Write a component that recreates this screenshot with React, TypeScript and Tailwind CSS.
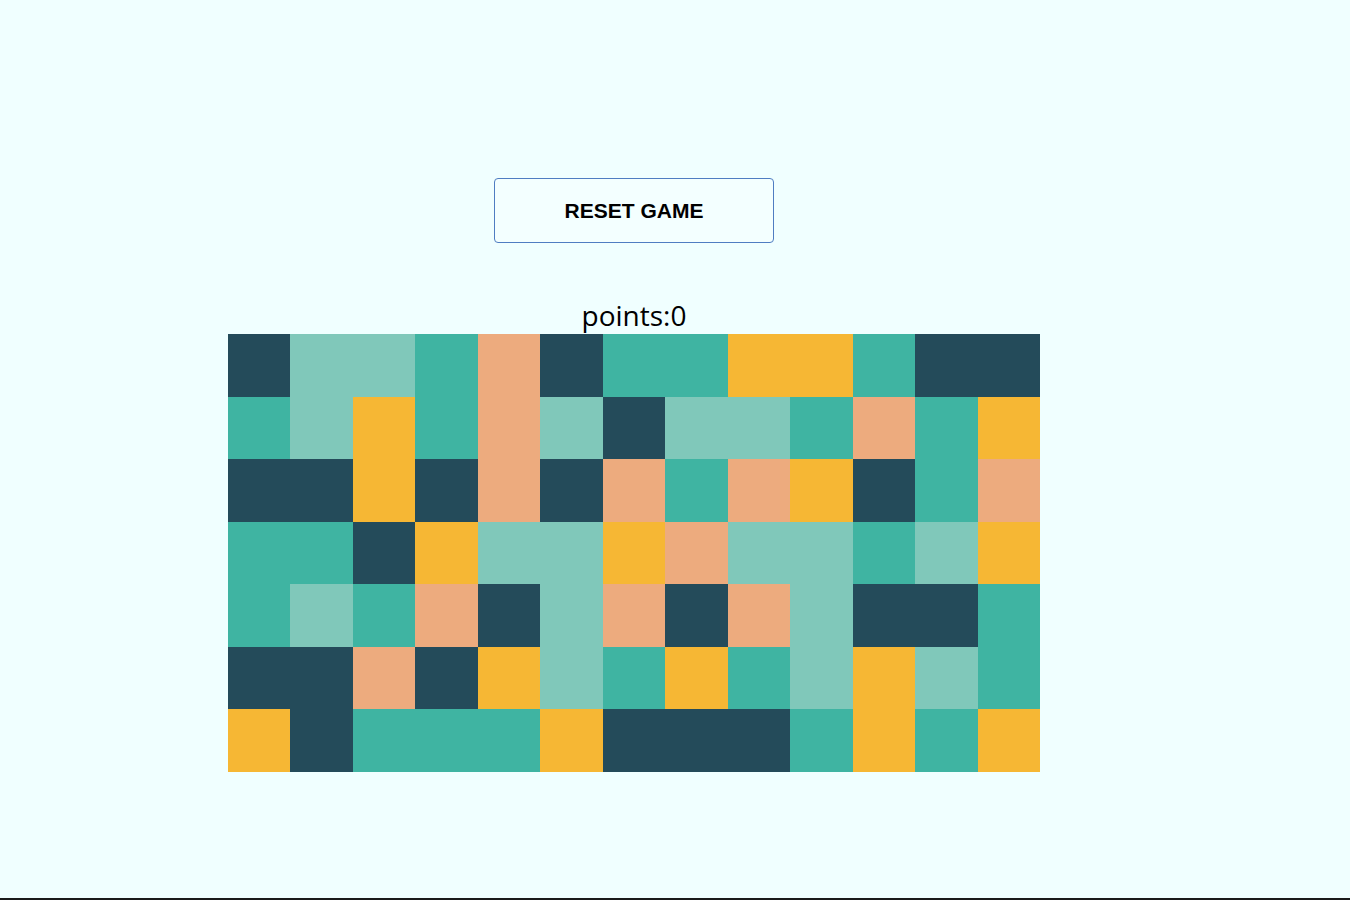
import React from "react";

const D = "bg-[#244b5a]";
const L = "bg-[#80c8ba]";
const T = "bg-[#3fb4a2]";
const P = "bg-[#edab7e]";
const Y = "bg-[#f6b734]";

const rows: string[][] = [
  [D, L, L, T, P, D, T, T, Y, Y, T, D, D],
  [T, L, Y, T, P, L, D, L, L, T, P, T, Y],
  [D, D, Y, D, P, D, P, T, P, Y, D, T, P],
  [T, T, D, Y, L, L, Y, P, L, L, T, L, Y],
  [T, L, T, P, D, L, P, D, P, L, D, D, T],
  [D, D, P, D, Y, L, T, Y, T, L, Y, L, T],
  [Y, D, T, T, T, Y, D, D, D, T, Y, T, Y],
];

export default function App() {
  return (
    <div className="h-[900px] w-full bg-[#f0ffff] border-b-[2px] border-[#1a1a1a] overflow-hidden">
      <div className="w-[1268px] flex flex-col items-center pt-[178px]">
        <button className="w-[280px] h-[65px] rounded-[4px] border-[1.5px] border-[#4f7dc2] bg-[#f3ffff] text-[21px] font-bold text-black font-['Liberation_Sans',Arial,sans-serif]">
          RESET GAME
        </button>
        <div className="mt-[53px] text-[28px] leading-[38px] text-black font-['Open_Sans','Noto_Sans',sans-serif]">
          points:0
        </div>
        <div className="grid grid-cols-[repeat(13,62.5px)] grid-rows-[repeat(7,62.5px)]">
          {rows.flatMap((r, i) =>
            r.map((c, j) => <div key={`${i}-${j}`} className={c} />)
          )}
        </div>
      </div>
    </div>
  );
}
